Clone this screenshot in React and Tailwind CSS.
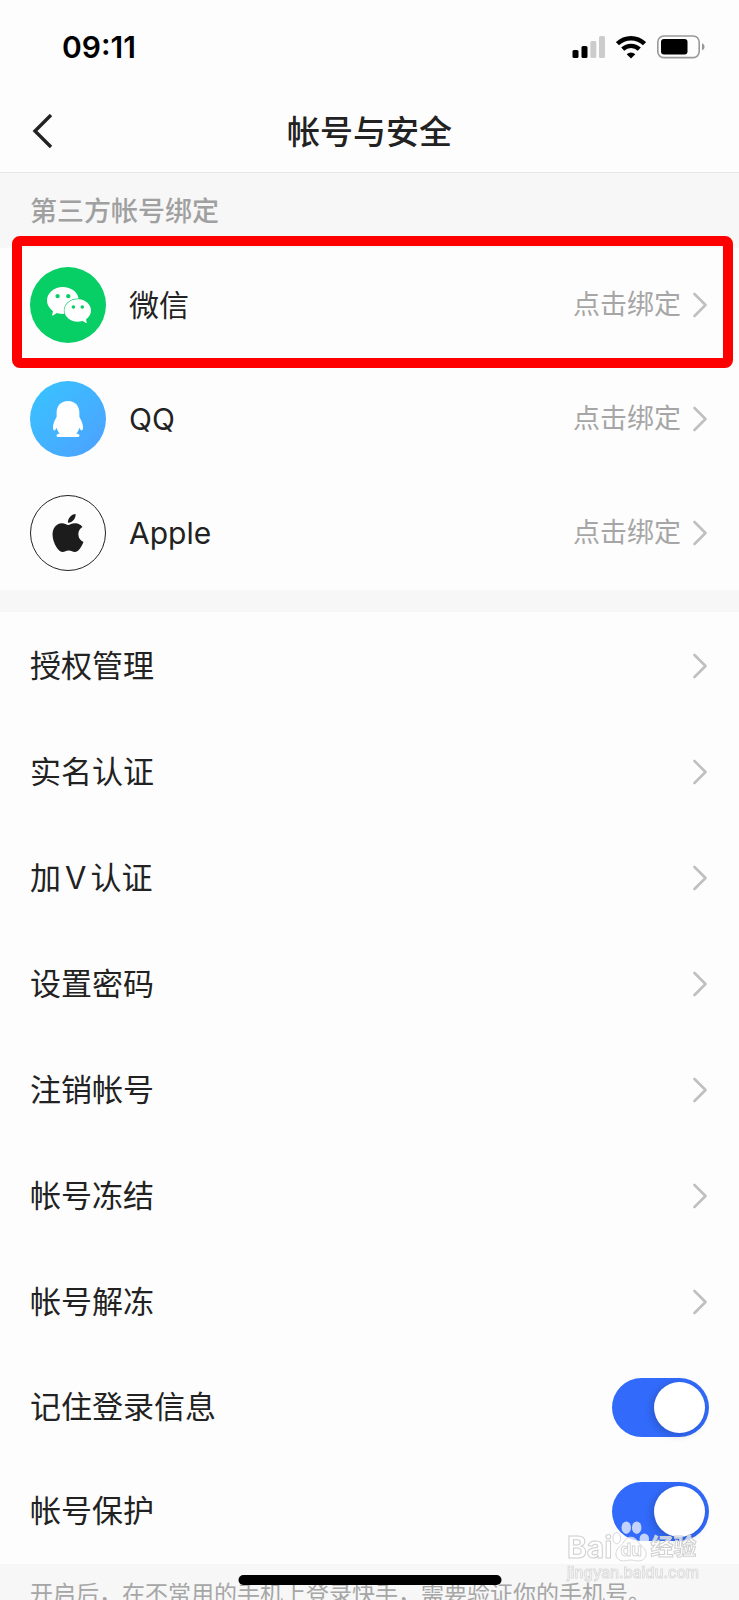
import { useState } from "react";
import { SiApple, SiWechat } from "react-icons/si";

const accounts = [
  { name: "微信", icon: <WechatBadge />, highlighted: true },
  { name: "QQ", icon: <QQBadge /> },
  { name: "Apple", icon: <AppleBadge /> },
];

const menuItems = [
  { id: "grants", label: "授权管理" },
  { id: "realname", label: "实名认证" },
  {
    id: "verify",
    label: (
      <span>
        加<span className="mx-1">V</span>认证
      </span>
    ),
  },
  { id: "password", label: "设置密码" },
  { id: "cancel", label: "注销帐号" },
  { id: "freeze", label: "帐号冻结" },
  { id: "unfreeze", label: "帐号解冻" },
];

function WechatBadge() {
  return (
    <span className="flex size-19 items-center justify-center rounded-full bg-[#07ce65] pl-0.5 text-white">
      <SiWechat size={44} />
    </span>
  );
}

function QQBadge() {
  return (
    <span className="flex size-19 items-center justify-center rounded-full bg-linear-to-br from-[#35c5ff] to-[#4c9fff] text-white">
      <svg width="32" height="38" viewBox="0 0 32 38" fill="currentColor">
        <path d="M16 1C8.600 1 4.800 6 4.600 12.400v4.600C3 20 1 23.500 1 27c0 2.300.5 3.500 1.100 3.500.8 0 1.800-1.400 2.600-2.800.5 2.300 1.700 4.300 3.100 5.900-1.800.4-3.300.9-3.300 1.900 0 1.100.9 1.500 2.900 1.500h17.200c2 0 2.900-.4 2.900-1.500 0-1-1.500-1.500-3.300-1.900 1.400-1.600 2.600-3.600 3.100-5.900.8 1.400 1.800 2.800 2.600 2.800.6 0 1.100-1.200 1.100-3.500 0-3.500-2-7-3.600-10v-4.600C27.200 6 23.400 1 16 1z" />
      </svg>
    </span>
  );
}

function AppleBadge() {
  return (
    <span className="flex size-19 items-center justify-center rounded-full border border-[#222] text-[#1c1c1c]">
      <SiApple size={38} />
    </span>
  );
}

function Chevron() {
  return (
    <svg
      width="14"
      height="26"
      viewBox="0 0 14 26"
      fill="none"
      stroke="#c0c0c0"
      strokeWidth="2.6"
      strokeLinecap="round"
      strokeLinejoin="round"
    >
      <path d="M1.500 2 12.500 13 1.500 24" />
    </svg>
  );
}

function StatusBar() {
  return (
    <div className="flex h-[94px] items-center justify-between pr-[34px] pl-[62px]">
      <span className="text-[30px] font-semibold text-black">09:11</span>
      <div className="flex items-center gap-[11px]">
        <svg width="33" height="22" viewBox="0 0 33 22">
          <rect x="0.500" y="14" width="6" height="8" rx="1.500" />
          <rect x="9.500" y="10" width="6" height="12" rx="1.500" />
          <rect x="18.300" y="5" width="6" height="17" rx="1.500" fill="#ccc" />
          <rect x="27" y="0" width="6" height="22" rx="1.500" fill="#ccc" />
        </svg>
        <svg width="30" height="23" viewBox="0 0 30 23">
          <path
            d="M1.500 7.700a19.500 19.500 0 0 1 27 0M6.700 13.200a12 12 0 0 1 16.600 0"
            fill="none"
            stroke="#000"
            strokeWidth="4.4"
          />
          <path d="M15 22.500l-4.300-4.300a6.200 6.200 0 0 1 8.600 0z" />
        </svg>
        <svg width="48" height="24" viewBox="0 0 48 24">
          <rect
            x="0.800"
            y="1"
            width="41.400"
            height="21.600"
            rx="6"
            fill="none"
            stroke="#999"
            strokeWidth="1.600"
          />
          <rect x="4" y="4" width="26.500" height="15.500" rx="3" />
          <path d="M45 8.300c3.400 1 3.400 6 0 7z" fill="#999" />
        </svg>
      </div>
    </div>
  );
}

function Header() {
  return (
    <header className="flex h-[79px] items-center justify-between border-b border-[#e6e6e6] px-7 pb-0.5">
      <button type="button" aria-label="返回" className="w-8">
        <svg
          width="28"
          height="36"
          viewBox="0 0 28 36"
          fill="none"
          stroke="#222"
          strokeWidth="3.400"
        >
          <path d="M23 1 7 17l16 16" />
        </svg>
      </button>
      <h1 className="text-[33px] font-medium">帐号与安全</h1>
      <span className="w-8" />
    </header>
  );
}

function AccountRow({ name, icon, highlighted }) {
  return (
    <li className="relative">
      <button
        type="button"
        className="flex h-[114px] w-full items-center pr-8 pl-[30px] text-left"
      >
        {icon}
        <span className="ml-[23px] flex-1 text-[30px]">{name}</span>
        <span className="mr-3 text-[27px] text-[#a6a6a6]">点击绑定</span>
        <Chevron />
      </button>
      {highlighted && (
        <div className="pointer-events-none absolute -top-3 right-1.5 -bottom-1.5 left-3 rounded-lg border-10 border-[#fe0000]" />
      )}
    </li>
  );
}

function ToggleRow({ label }) {
  const [on, setOn] = useState(true);

  return (
    <label className="flex h-[104px] items-center justify-between px-[30px]">
      {label}
      <input
        type="checkbox"
        role="switch"
        checked={on}
        onChange={() => setOn(!on)}
        className="flex h-[59px] w-[97px] appearance-none items-center rounded-full bg-[#ddd] p-1 before:size-[51px] before:rounded-full before:bg-white before:shadow-[-2px_2px_8px_rgba(0,0,0,0.2)] checked:justify-end checked:bg-[#326bfb]"
      />
    </label>
  );
}

function Watermark() {
  return (
    <div className="pointer-events-none fixed right-[38px] bottom-[17px] w-[134px] text-white/70">
      <div className="flex h-[46px] items-end leading-8 font-bold [-webkit-text-stroke:1px_#cfcfcf]">
        <span className="text-[30px]">Bai</span>
        <svg
          width="38"
          height="44"
          viewBox="0 0 40 44"
          fill="currentColor"
          stroke="#d6d6d6"
          className="shrink-0"
        >
          <ellipse cx="5" cy="19" rx="4" ry="6" />
          <ellipse cx="15" cy="8" rx="5" ry="6.500" stroke="none" />
          <ellipse cx="26" cy="8" rx="5" ry="6.500" stroke="none" />
          <ellipse cx="34" cy="20" rx="5" ry="6" stroke="none" />
          <path d="M20 18c6 0 7 6 12 10 7 6 4 15-4 15-4 0-5-1-8-1s-4 1-8 1c-8 0-11-9-4-15 5-4 6-10 12-10z" />
          <text x="9" y="38" fontSize="18">
            du
          </text>
        </svg>
        <span className="text-[23px]">经验</span>
      </div>
      <div className="text-[15px] leading-5 font-medium [-webkit-text-stroke:1px_#dcdcdc]">
        jingyan.baidu.com
      </div>
    </div>
  );
}

export default function App() {
  return (
    <div className="h-screen overflow-hidden bg-[#fdfdfd] font-[Inter,'Noto_Sans_CJK_SC',sans-serif] text-[31px] leading-10 text-[#222]">
      <StatusBar />
      <Header />
      <main>
        <section>
          <h2 className="h-[75px] bg-[#f7f7f7] px-[30px] pt-[19px] text-[27px] font-medium text-[#a0a0a0]">
            第三方帐号绑定
          </h2>
          <ul>
            {accounts.map((account) => (
              <AccountRow key={account.name} {...account} />
            ))}
          </ul>
        </section>

        <section className="border-t-22 border-[#f7f7f7] py-px">
          <ul>
            {menuItems.map((item) => (
              <li key={item.id}>
                <button
                  type="button"
                  className="flex h-[106px] w-full items-center justify-between pr-8 pl-[30px] text-left"
                >
                  {item.label}
                  <Chevron />
                </button>
              </li>
            ))}
          </ul>
          <ToggleRow label="记住登录信息" />
          <ToggleRow label="帐号保护" />
        </section>

        <p className="bg-[#f7f7f7] px-[30px] py-2.5 text-[23px] text-[#a6a6a6]">
          开启后，在不常用的手机上登录快手，需要验证你的手机号。
        </p>
      </main>

      <Watermark />
      <div className="fixed bottom-[15px] left-1/2 h-2.5 w-[263px] -translate-x-1/2 rounded-full bg-black" />
    </div>
  );
}
